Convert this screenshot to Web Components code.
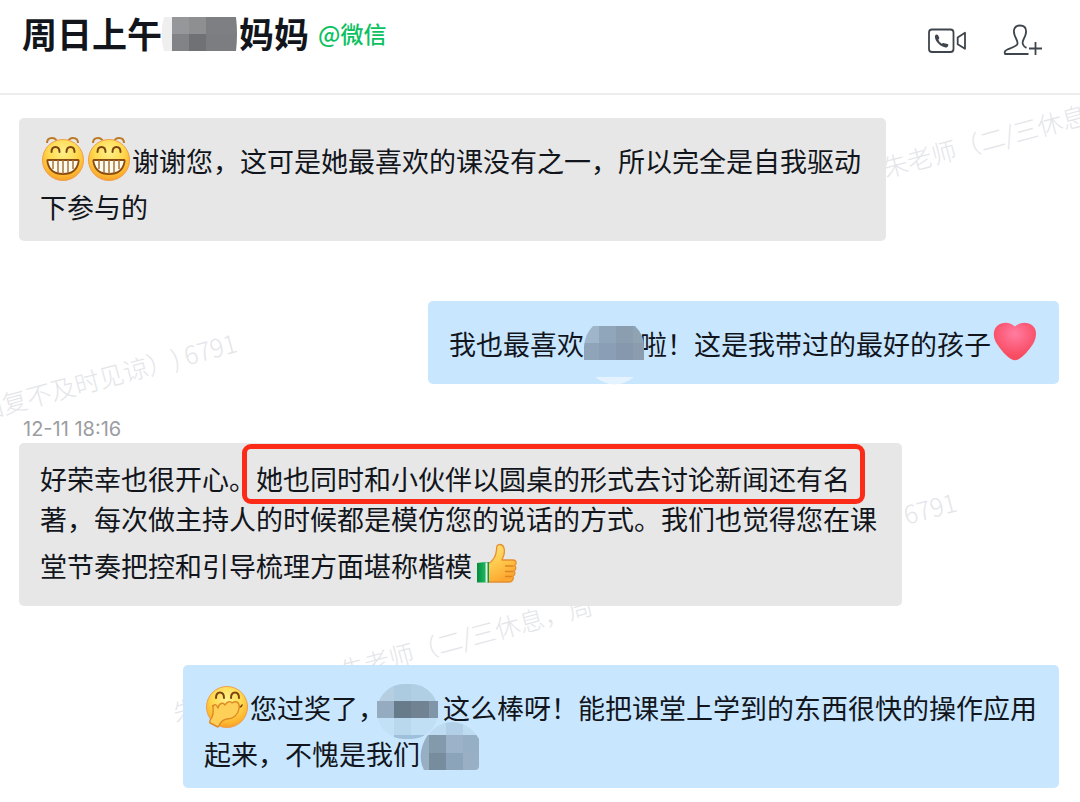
<!DOCTYPE html>
<html lang="zh-CN">
<head>
<meta charset="utf-8">
<meta name="viewport" content="width=device-width, initial-scale=1">
<title>聊天</title>
<style>
  body {
    margin: 0;
    background: #fff;
    color: #12161c;
    font-family: "Noto Sans CJK SC", sans-serif;
  }
</style>
</head>
<body>
<chat-window>
  <chat-header slot="header">
    周日上午<chat-redaction kind="title"></chat-redaction>妈妈
    <span slot="source">@微信</span>
  </chat-header>

  <chat-watermark style="--x: 883px; --y: 54px">朱老师（二/三休息</chat-watermark>
  <chat-watermark style="--x: -22px; --y: 297px">回复不及时见谅）) 6791</chat-watermark>
  <chat-watermark style="--x: 904px; --y: 401px">6791</chat-watermark>
  <chat-watermark style="--x: 311px; --y: 565px">珑 朱老师（二/三休息，周</chat-watermark>
  <chat-watermark style="--x: 173px; --y: 599px">朱</chat-watermark>

  <chat-message><chat-emoji name="grin"></chat-emoji><chat-emoji name="grin"></chat-emoji>谢谢您，这可是她最喜欢的课没有之一，所以完全是自我驱动<br>下参与的</chat-message>
  <chat-message own>我也最喜欢<chat-redaction kind="first"></chat-redaction>啦！这是我带过的最好的孩子<chat-emoji name="heart"></chat-emoji></chat-message>
  <chat-message time="12-11 18:16">好荣幸也很开心。<chat-highlight>她也同时和小伙伴以圆桌的形式去讨论新闻还有名</chat-highlight><br>著，每次做主持人的时候都是模仿您的说话的方式。我们也觉得您在课<br>堂节奏把控和引导梳理方面堪称楷模<chat-emoji name="thumb"></chat-emoji></chat-message>
  <chat-message own><chat-emoji name="giggle"></chat-emoji>您过奖了，<chat-redaction kind="second"></chat-redaction>这么棒呀！能把课堂上学到的东西很快的操作应用<br>起来，不愧是我们<chat-redaction kind="third"></chat-redaction></chat-message>
</chat-window>

<script>
const define = (name, html, setup) => {
  const tpl = document.createElement('template');
  tpl.innerHTML = html;
  customElements.define(name, class extends HTMLElement {
    constructor() {
      super();
      this.attachShadow({ mode: 'open' }).append(tpl.content.cloneNode(true));
    }
    connectedCallback() {
      if (setup) setup(this, this.shadowRoot);
    }
  });
};

define('chat-window', `
  <style>
    :host { display: block; }
    main {
      position: relative;
      overflow: hidden;
      display: flex;
      flex-direction: column;
      padding: 23px 21px 13px 19px;
    }
  </style>
  <slot name="header"></slot>
  <main><slot></slot></main>
`);

define('chat-header', `
  <style>
    :host {
      display: flex;
      align-items: flex-start;
      justify-content: space-between;
      height: 93px;
      box-sizing: content-box;
      border-bottom: 2px solid #ededee;
    }
    .name { display: flex; align-items: flex-start; padding: 7px 0 0 22px; gap: 9px; line-height: 52px; white-space: nowrap; }
    h1 { margin: 0; font-size: 35px; font-weight: 700; --drop: -3px; }
    .source { font-size: 23px; font-weight: 500; color: #0bc15f; }
    nav { display: flex; gap: 34px; padding: 20px 36px 0 0; }
    button { display: block; border: 0; padding: 0; background: none; width: 42px; height: 40px; color: #3f454c; cursor: pointer; }
    svg { display: block; fill: none; stroke: currentColor; stroke-width: 1.8; stroke-linejoin: round; }
  </style>
  <div class="name">
    <h1><slot></slot></h1>
    <div class="source"><slot name="source"></slot></div>
  </div>
  <nav>
    <button type="button" aria-label="视频通话">
      <svg width="42" height="40" viewBox="0 0 42 40">
        <rect x="3" y="9.5" width="24.5" height="22.5" rx="3"/>
        <path d="M39 12.8v16l-7.3-4.6v-6.8z"/>
        <path d="M9 15.8c.8-1.6 2.4-1.8 3.2-.4l1 2.2c.3.9-.1 1.4-.8 1.9.5 1.8 1.6 3.2 3.4 4.2.8-.5 1.5-.8 2.3-.4l3.4.8c.9.3 1 1.1.6 1.8-.8 1.5-2.3 1.8-4.2 1.2-4.7-1.6-8.3-5.6-8.9-9.5-.1-.7-.1-1.2 0-1.8z" fill="currentColor" stroke="none"/>
      </svg>
    </button>
    <button type="button" aria-label="添加成员">
      <svg width="42" height="40" viewBox="0 0 42 40">
        <path d="M26.500 34H3c-.9-2.200.2-3.600 2.500-4.500C10 27.700 14 26.300 15.200 24.500c.8-1.500.3-3-.7-5C12.700 16 11.900 14 11.900 11.500 11.900 7.600 14.500 5.500 18 5.500s6.100 2.100 6.100 6c0 2.500-.8 4.500-2.600 8-1 2-1.200 3.500-.5 5 .6 1.500 1.800 2.600 3.500 3.400"/>
        <path d="M27 28.500H40M33.500 22v13"/>
      </svg>
    </button>
  </nav>
`);

define('chat-watermark', `
  <style>
    :host {
      position: absolute;
      left: var(--x);
      top: var(--y);
      font-size: 25px;
      line-height: 36px;
      font-weight: 300;
      text-spacing-trim: space-all;
      white-space: nowrap;
      color: #e4e5e9;
      transform: rotate(-15deg);
      transform-origin: left center;
      pointer-events: none;
    }
  </style>
  <slot></slot>
`);

define('chat-message', `
  <style>
    :host { display: flex; flex-direction: column; align-items: flex-start; position: relative; margin-bottom: 60px; }
    :host([own]) { align-items: flex-end; margin-bottom: 32px; }
    :host([time]) { margin-bottom: 59px; }
    :host(:last-of-type) { margin-bottom: 0; }
    time { font: 20px/26px Inter, sans-serif; color: #9a9da1; margin: 0 0 1px 4px; }
    time[hidden] { display: none; }
    .bubble {
      padding: 16px 25px 14px 21px;
      border-radius: 5px;
      background: #e7e7e7;
      font-size: 27px;
      line-height: 40px;
      max-width: 100%;
      box-sizing: border-box;
    }
    :host([own]) .bubble { background: #c9e6ff; padding-right: 22px; }
  </style>
  <time hidden></time>
  <div class="bubble"><slot></slot></div>
`, (el, root) => {
  const time = root.querySelector('time');
  if (el.hasAttribute('time')) {
    time.textContent = el.getAttribute('time');
    time.hidden = false;
  }
});

define('chat-highlight', `
  <style>
    :host { position: relative; display: inline-block; }
    .frame {
      position: absolute;
      inset: -15px -15px -5px -14px;
      border: 5px solid #fc2b17;
      border-radius: 9px;
      pointer-events: none;
    }
  </style>
  <slot></slot><div class="frame"></div>
`);

const rects = list => list.map(([x, y, w, h, c]) =>
  `<rect x="${x}" y="${y}" width="${w}" height="${h}" fill="${c}"/>`).join('');

const redactions = {
  title: { w: 77, clip: '<path d="M2 0H74Q76 17 74 34H2Q-3 17 2 0z"/>', cells: [
    [-2, 0, 12, 34, '#efefef'], [10, 0, 17, 17, '#96979a'], [27, 0, 17, 17, '#8e8f91'], [44, 0, 34, 17, '#7e7f82'],
    [10, 17, 17, 17, '#828386'], [27, 17, 17, 17, '#707175'], [44, 17, 34, 17, '#7c7d81']] },
  first: { w: 56, clip: '<path d="M9 0H51Q60 9 60 20V34H0V20Q1 8 9 0z"/><path d="M11 51H50Q31 66 11 51z"/>', cells: [
    [0, 0, 15, 17, '#9fb6ca'], [15, 0, 17, 17, '#8fa6bb'], [32, 0, 17, 17, '#8a9eb0'], [49, 0, 12, 17, '#8fa3b3'],
    [0, 17, 15, 17, '#8fa3b9'], [15, 17, 17, 17, '#8a9fb6'], [32, 17, 17, 17, '#8598ad'], [49, 17, 12, 17, '#8a9cae'],
    [0, 50, 60, 12, '#e4f3ff']] },
  second: { w: 58, clip: '<rect x="-8" y="-6" width="61" height="55" rx="27"/><rect x="-8" y="11" width="61" height="17"/>', cells: [
    [-8, -6, 17, 17, '#b5cee2'], [9, -6, 17, 17, '#adcbe0'], [26, -6, 27, 17, '#b1cfe4'],
    [-8, 11, 17, 17, '#95abc0'], [9, 11, 17, 17, '#687b8b'], [26, 11, 18, 17, '#718292'], [44, 11, 9, 17, '#8195a8'],
    [-8, 28, 17, 21, '#c2e0f6'], [9, 28, 17, 17, '#b9d8ee'], [26, 28, 27, 17, '#c0dff5'], [9, 45, 34, 4, '#9fc0da']] },
  third: { w: 60, clip: '<path d="M7 0Q18-14 32-14Q50-13 59 3V30Q59 34 55 34H4Q-4 18 7 0z"/>', cells: [
    [-2, -14, 28, 13, '#bddbf1'], [26, -14, 17, 13, '#b1cfe6'], [43, -14, 17, 13, '#bddbf1'],
    [-2, -1, 11, 36, '#98afc3'], [9, -1, 17, 18, '#8399ac'], [26, -1, 17, 18, '#9bb2c9'], [43, -1, 17, 18, '#96afc5'],
    [9, 17, 17, 18, '#778c9d'], [26, 17, 17, 18, '#8ca4ba'], [43, 17, 17, 18, '#98afc4']] }
};

define('chat-redaction', `
  <style>
    :host { display: inline-block; position: relative; height: 34px; vertical-align: var(--drop, -5px); }
    svg { position: absolute; left: 0; top: 0; overflow: visible; }
  </style>
`, (el, root) => {
  const kind = el.getAttribute('kind'), r = redactions[kind];
  el.style.width = r.w + 'px';
  root.innerHTML += `<svg width="${r.w}" height="34" aria-hidden="true" shape-rendering="crispEdges">
    <clipPath id="c">${r.clip}</clipPath><g clip-path="url(#c)">${rects(r.cells)}</g></svg>`;
});

const skin = `<radialGradient id="skin" cx=".5" cy=".3" r=".72">
  <stop offset="0" stop-color="#fff08a"/><stop offset=".5" stop-color="#ffd94e"/>
  <stop offset=".85" stop-color="#fdb22c"/><stop offset="1" stop-color="#f39a33"/></radialGradient>`;

const emojis = {
  grin: `${skin}
    <g fill="none" stroke="#bd7a24" stroke-width="2"><path d="M7 7q0-5 5-5 4 0 5 4M28 6q1-4 5-4 5 0 5 5"/></g>
    <circle cx="23" cy="24" r="20.5" fill="url(#skin)" stroke="#f0a04a" stroke-width="1"/>
    <g fill="none" stroke="#7b4312" stroke-width="2" stroke-linecap="round"><path d="M11.5 16q0-5 4-5t4 5M26.5 16q0-5 4-5t4 5"/></g>
    <path d="M8 24H38Q39 24 38.5 26C37 34 31 38 23 38S9 34 7.5 26Q7 24 8 24z" fill="#fffdf2" stroke="#8a4c12" stroke-width="1.8"/>
    <path d="M13 24v9M18 24v13M23 24v14M28 24v13M33 24v9" stroke="#a8743a" stroke-width="1.5"/>`,
  giggle: `${skin}
    <circle cx="23" cy="24" r="20.5" fill="url(#skin)" stroke="#f0a04a" stroke-width="1"/>
    <g fill="none" stroke="#7b4312" stroke-width="2" stroke-linecap="round"><path d="M12 15q0-5.5 4-5.5t4 5.5M27 15q0-5.5 4-5.5t4 5.5"/><path d="M9 23q1 2 4 1M33 24q4 1 5-2" stroke-width="1.5"/></g>
    <path d="M6 40C5 38 7 36 8 34 10 30 9 27 9 25 9 21 12 20 14 25 15 20 19 19 21 22 23 18 27 18 28 20 33 17 36 20 35 26 34 32 29 36 23 36 18 37 17 39 14 44z" fill="#ffd057" stroke="#de8a24" stroke-width="1.4" stroke-linejoin="round"/>`,
  heart: `<radialGradient id="h" cx=".5" cy=".3" r=".6"><stop offset="0" stop-color="#ff7da2"/><stop offset=".5" stop-color="#fd6280"/><stop offset="1" stop-color="#f74b60"/></radialGradient>
    <path d="M24 7.500C29 2.500 37 2.500 42 7c4.500 4.500 3.500 12 0 18-4 6-9 12-14 15-3 1.700-5 1.700-8 0C15 37 10 31 6 25 2 19 1.500 11.500 6 7 11 2.500 19 2.500 24 7.500z" fill="url(#h)"/>`,
  thumb: `<linearGradient id="t" x2=".4" y2="1"><stop offset="0" stop-color="#ffe27a"/><stop offset=".5" stop-color="#ffcc50"/><stop offset="1" stop-color="#fca72f"/></linearGradient>
    <linearGradient id="g"><stop offset="0" stop-color="#078a3e"/><stop offset=".6" stop-color="#19b35c"/><stop offset="1" stop-color="#0a9848"/></linearGradient>
    <path d="M16 23c5-3 8-8 8.5-14C24.5 5 25 3.5 28 3.5c4 0 5 5 4 10l-2 5.5h11c3.5 0 4 4 1.5 5.5 2 1.5 1.5 4.5-.5 5.5 1.5 2 1 4-1 5 1 3-.5 6-4 6H16z" fill="url(#t)" stroke="#e48f30" stroke-width="1.3" stroke-linejoin="round"/>
    <path d="M33 25h8.5M33 30.5h8M33 35.5h7" stroke="#dd8525" stroke-width="1.5"/>
    <path d="M5 22q6-1 12-1V41.5H5z" fill="url(#g)"/>
    <path d="M13.5 21.5h2V41.5h-2z" fill="#e9f5e9"/>`
};

define('chat-emoji', `
  <style>
    :host { display: inline-block; width: 46px; height: 53px; overflow: hidden; vertical-align: -15px; }
    svg { display: block; margin: 2px 0 5px; }
  </style>
`, (el, root) => {
  root.innerHTML += `<svg width="46" height="46" viewBox="0 0 46 46" aria-hidden="true">${emojis[el.getAttribute('name')]}</svg>`;
});
</script>
</body>
</html>
